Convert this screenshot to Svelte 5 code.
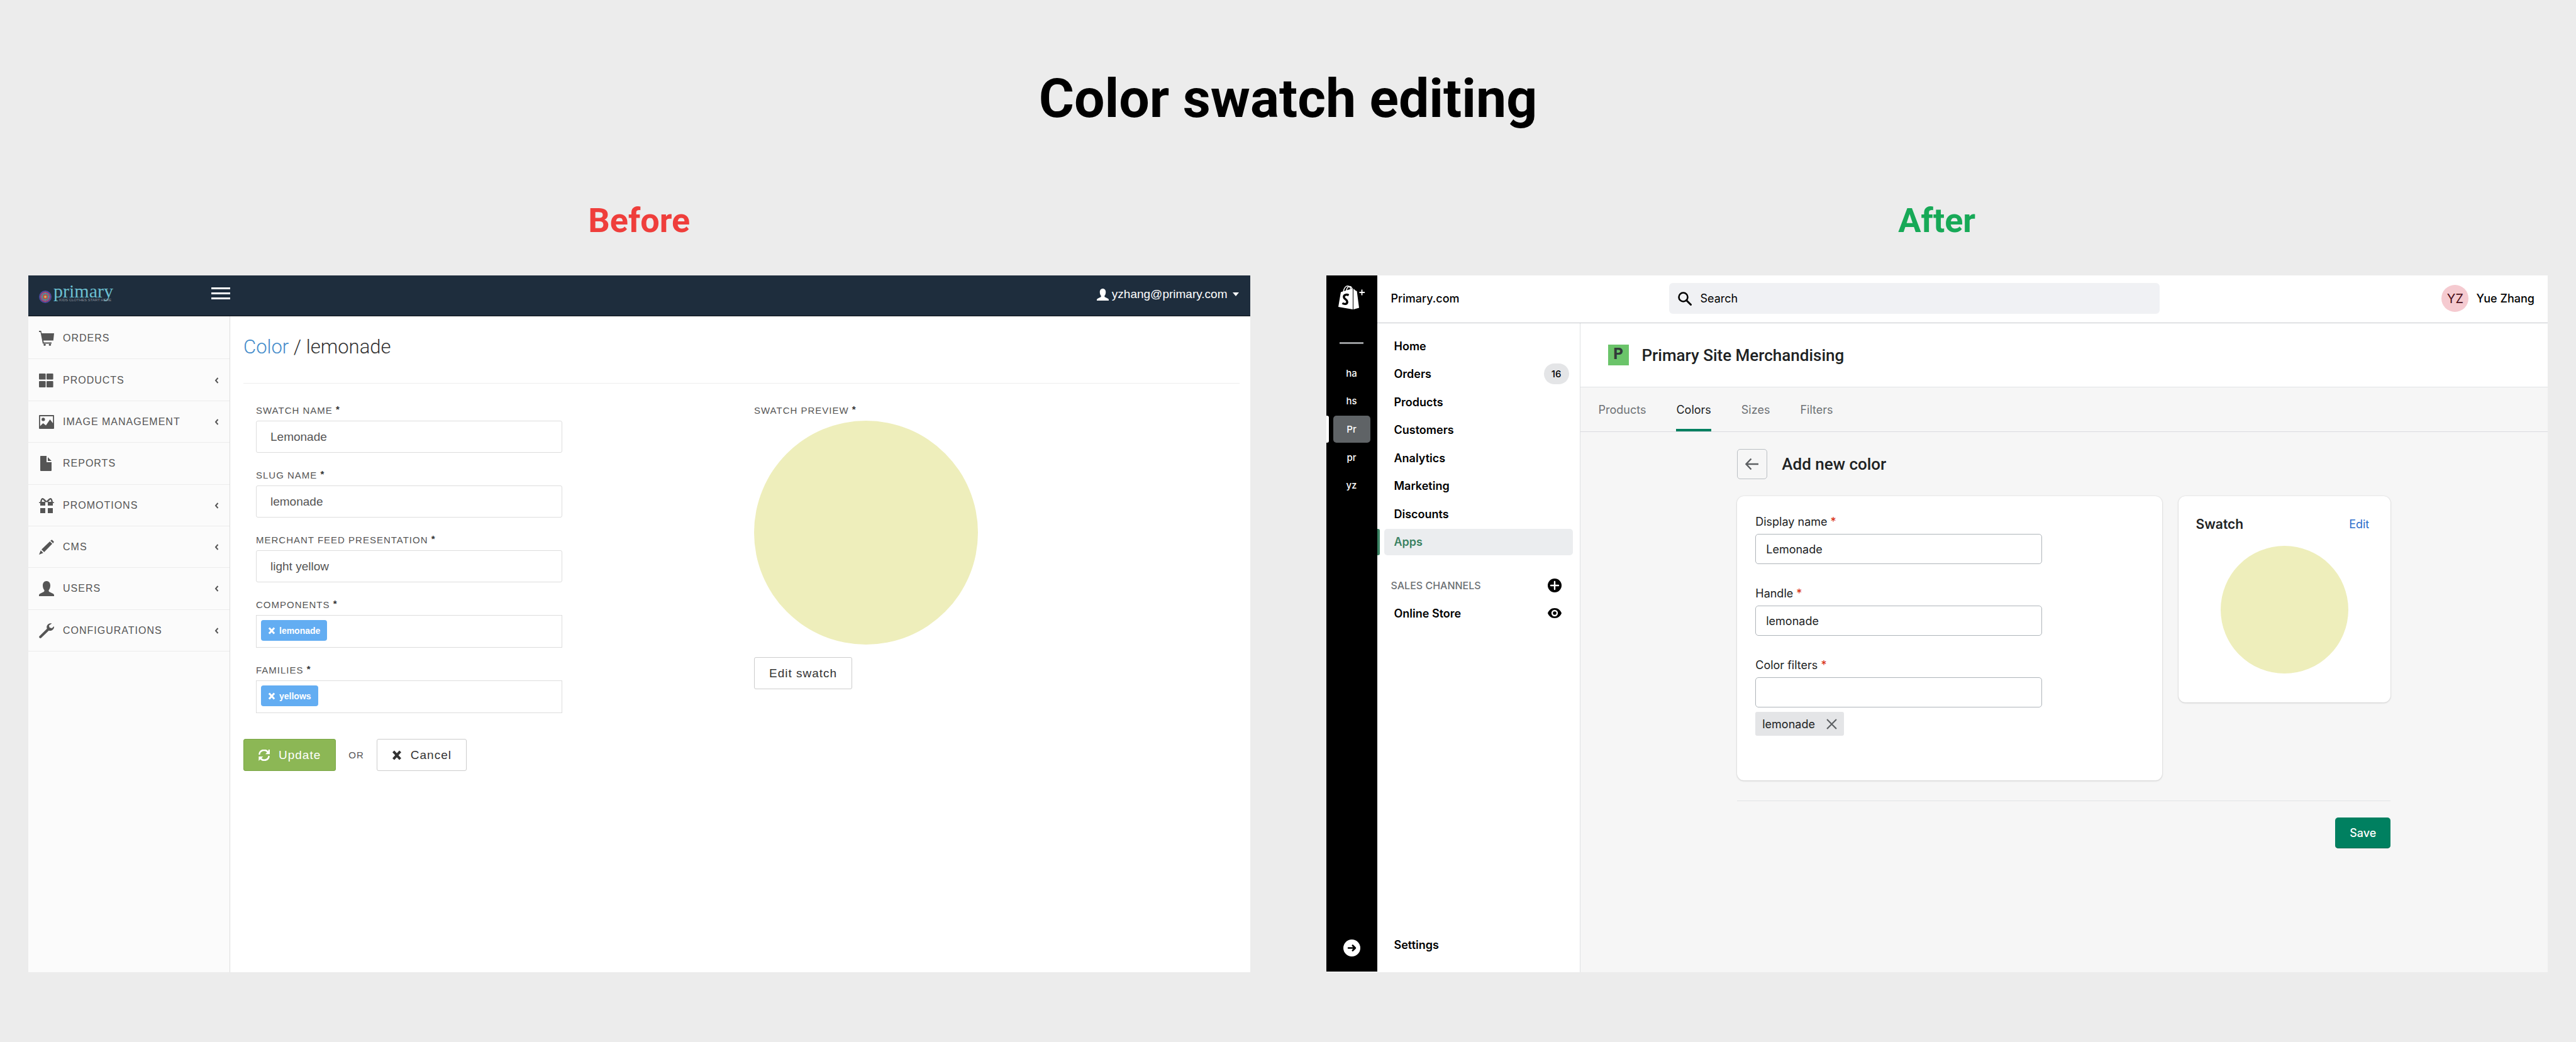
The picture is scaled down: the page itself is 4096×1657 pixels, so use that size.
<script>
  const adminMenu = [
    { label: 'Orders', icon: 'cart', sub: false },
    { label: 'Products', icon: 'grid', sub: true },
    { label: 'Image Management', icon: 'picture', sub: true },
    { label: 'Reports', icon: 'file', sub: false },
    { label: 'Promotions', icon: 'gift', sub: true },
    { label: 'CMS', icon: 'pencil', sub: true },
    { label: 'Users', icon: 'user', sub: true },
    { label: 'Configurations', icon: 'wrench', sub: true }
  ];
  const adminFields = [
    { id: 'swatch-name', label: 'Swatch name', value: 'Lemonade' },
    { id: 'slug-name', label: 'Slug name', value: 'lemonade' },
    { id: 'feed', label: 'Merchant feed presentation', value: 'light yellow' }
  ];
  const tagFields = [
    { label: 'Components', tag: 'lemonade' },
    { label: 'Families', tag: 'yellows' }
  ];
  const stores = ['ha', 'hs', 'Pr', 'pr', 'yz'];
  const shopNav = ['Home', 'Orders', 'Products', 'Customers', 'Analytics', 'Marketing', 'Discounts', 'Apps'];
  const tabs = ['Products', 'Colors', 'Sizes', 'Filters'];
  const shopFields = [
    { id: 'display-name', label: 'Display name', value: 'Lemonade' },
    { id: 'handle', label: 'Handle', value: 'lemonade' },
    { id: 'filters', label: 'Color filters', value: '' }
  ];
</script>

{#snippet glyph(name)}
  <svg class="glyph" viewBox="0 0 24 24" fill="currentColor" aria-hidden="true">
    {#if name === 'cart'}
      <path d="M0 0h3.4l.9 4H24l-1.2 11.6H7l.5 2.8H20v2H6L2.4 2H0z" />
      <circle cx="9" cy="22.3" r="1.7" /><circle cx="17.4" cy="22.3" r="1.7" />
    {:else if name === 'grid'}
      <path d="M1 1h8.6a1 1 0 0 1 1 1v8.6H1a1 1 0 0 1-1-1V2a1 1 0 0 1 1-1zM13 1h8.600a1 1 0 0 1 1 1v7.600a1 1 0 0 1-1 1H13a1 1 0 0 1-1-1V2a1 1 0 0 1 1-1zM1 13h8.600a1 1 0 0 1 1 1v8a1 1 0 0 1-1 1H1a1 1 0 0 1-1-1v-8a1 1 0 0 1 1-1zM13 13h8.600a1 1 0 0 1 1 1v8a1 1 0 0 1-1 1H13a1 1 0 0 1-1-1v-8a1 1 0 0 1 1-1z" />
    {:else if name === 'picture'}
      <path fill-rule="evenodd" d="M1 1h22a1 1 0 0 1 1 1v20a1 1 0 0 1-1 1H1a1 1 0 0 1-1-1V2a1 1 0 0 1 1-1zM1.800 3v15.500L6.500 14l4.500 3.500L17.500 8l4.700 6V3zM6.800 5.200a2.700 2.700 0 1 1 0 5.400a2.700 2.700 0 0 1 0-5.400z" />
    {:else if name === 'file'}
      <path d="M2.800 0H12v10h8v13a1 1 0 0 1-1 1H3a1 1 0 0 1-1-1V1a1 1 0 0 1 .8-1zM14 2l6 6h-6z" />
    {:else if name === 'gift'}
      <path d="M2 6.400C2.400 2.500 4 0 5.600 0 7.800 0 10 3 12 4.800 14 3 16.200 0 18.400 0 20 0 21.600 2.500 22 6.400h2V8h-2v4h-8V6.400h-4V12H2V8H0V6.400zM4.400 6H9.500L6 2.200C5 2.500 4.700 4 4.400 6zM19.600 6C19.300 4 19 2.500 18 2.200L14.500 6zM2 16h8v8H2zM14 16h8v8h-8z" fill-rule="evenodd" />
    {:else if name === 'pencil'}
      <path d="M20.600.3l3.200 3.200-1.300 2.600-4.400-4.400zM17.200 2.900l3.900 3.900L8.200 20 4 15.800zM2.800 17.200l4 4L0 24z" />
    {:else if name === 'user'}
      <path d="M12 0c3.800 0 6 3 6 7 0 3.400-1 5.600-2.400 7.200-.4 1.700 0 2.500 1.600 3.300l5 2.400c1.300.7 1.800 1.500 1.800 2.600V24H0v-1.500c0-1.100.5-1.900 1.800-2.600l5-2.400c1.600-.8 2-1.600 1.600-3.300C7 12.600 6 10.400 6 7c0-4 2.200-7 6-7z" />
    {:else if name === 'wrench'}
      <path d="M20.400.4c-3.200-1-7.200 1.200-8 4.600-.3 1.400-.1 2.600.3 3.700L.8 20.400a2 2 0 0 0 0 2.800 2 2 0 0 0 2.900 0L15.600 11.700c3.600 1.200 7.800-1.400 8.400-5.300l-.2-1.400-3.300 3-3.700-1-1-3.300z" />
    {:else if name === 'cross'}
      <path d="M1.500 5 6 .8 12 7.300 18 .8 22.500 5 16 12l6.500 7L18 23.200l-6-6.500-6 6.500L1.500 19 8 12z" />
    {:else if name === 'refresh'}
      <path d="M21 0h3V9.500h-9.500l3.700-3.600A8.500 8.500 0 0 0 3.300 11L.2 10.500A11.500 11.500 0 0 1 20.500 3.500zM.5 24V14.500H10l-3.700 3.600A8.500 8.500 0 0 0 20.700 13l3.100.5A11.500 11.500 0 0 1 3.700 20.500z" />
    {/if}
  </svg>
{/snippet}

<div class="board">
  <h1>Color swatch editing</h1>
  <div class="columns">
    <section class="column">
      <h2 class="before">Before</h2>
      <div class="frame admin">
        <header class="admin-top">
          <svg class="brand" viewBox="0 -10 126 50" role="img" aria-label="primary">
            <g fill="none" stroke-width="2">
              <circle cx="10" cy="20" r="9" stroke="#4b4a9c" />
              <circle cx="10" cy="20" r="7" stroke="#b04a7c" />
              <circle cx="10" cy="20" r="5" stroke="#4f9aa6" />
              <circle cx="10" cy="20" r="3" stroke="#c4504e" />
            </g>
            <circle cx="10" cy="20" r="2" fill="#d8b45a" />
            <text x="23" y="21" class="brand-name">primary</text>
            <text x="32" y="27" class="brand-line">KIDS CLOTHES START HERE</text>
          </svg>
          <button class="burger" aria-label="Menu"><span></span><span></span><span></span></button>
          <button class="account">{@render glyph('user')}yzhang@primary.com<span class="caret"></span></button>
        </header>
        <div class="admin-body">
          <nav class="admin-nav">
            <ul>
              {#each adminMenu as item}
                <li>
                  <a href="#{item.icon}">
                    {@render glyph(item.icon)}
                    <span class="grow">{item.label}</span>
                    {#if item.sub}
                      <svg class="chev" viewBox="0 0 7 10" aria-hidden="true"><path d="M5.500 1 2 5l3.500 4" fill="none" stroke="currentColor" stroke-width="2" /></svg>
                    {/if}
                  </a>
                </li>
              {/each}
            </ul>
          </nav>
          <main class="admin-main">
            <h3><a href="#color">Color</a> / lemonade</h3>
            <form class="admin-form">
              <div class="fields">
                {#each adminFields as f}
                  <div class="field">
                    <label for={f.id}>{f.label} <b>*</b></label>
                    <input id={f.id} value={f.value} />
                  </div>
                {/each}
                {#each tagFields as f}
                  <div class="field">
                    <span class="label">{f.label} <b>*</b></span>
                    <div class="tagbox"><button type="button" class="chip">{@render glyph('cross')}{f.tag}</button></div>
                  </div>
                {/each}
              </div>
              <div class="preview">
                <span class="label">Swatch preview <b>*</b></span>
                <div class="disc big"></div>
                <button type="button" class="btn">Edit swatch</button>
              </div>
            </form>
            <div class="actions">
              <button class="btn green">{@render glyph('refresh')}Update</button>
              <span>OR</span>
              <button class="btn cancel">{@render glyph('cross')}Cancel</button>
            </div>
          </main>
        </div>
      </div>
    </section>

    <section class="column">
      <h2 class="after">After</h2>
      <div class="frame shop">
        <aside class="rail">
          <svg class="bag" viewBox="0 0 42 38" aria-label="Shopify Plus" role="img">
            <path fill="#fff" d="M4 10.500 23 4.500V38L0 34zM24 5l4 3.500 1.500.3L33 35.500 24 38z" />
            <path fill="none" stroke="#fff" stroke-width="1.500" d="M8 10C9 4 12 .8 14.500 .8S19.500 3 20 7M12.500 9C13.500 4 16 1.500 18 1.500S21.500 3 22 6" />
            <path fill="none" stroke="#000" stroke-width="3.400" d="M16.500 15.500C13 13.500 8.800 15 8.800 18.200 8.800 22 14.200 22 14.200 26 14.200 30 9.500 30.200 6.500 28" />
            <path fill="none" stroke="#fff" stroke-width="1.800" d="M37.500 6.500v9M33.500 11h8.500" />
          </svg>
          <span class="dash"></span>
          <ul>
            {#each stores as s}
              <li class:on={s === 'Pr'}><button>{s}</button></li>
            {/each}
          </ul>
          <button class="expand" aria-label="Expand">
            <svg viewBox="0 0 28 28"><circle cx="14" cy="14" r="14" fill="#fff" /><path d="M8.400 14h10.500M15.400 9.800 19.600 14l-4.200 4.200" fill="none" stroke="#000" stroke-width="2.800" stroke-linecap="round" stroke-linejoin="round" /></svg>
          </button>
        </aside>
        <div class="shop-right">
          <header class="shop-top">
            <strong>Primary.com</strong>
            <label class="search">
              <svg viewBox="0 0 22 22" aria-hidden="true"><circle cx="8.500" cy="8.500" r="7" fill="none" stroke="#000" stroke-width="2.600" /><path d="M13.500 13.500 20.500 20.500" stroke="#000" stroke-width="3" stroke-linecap="round" /></svg>
              <input type="search" placeholder="Search" aria-label="Search" />
            </label>
            <button class="me"><span class="avatar">YZ</span>Yue Zhang</button>
          </header>
          <div class="shop-body">
            <nav class="shop-nav">
              <ul>
                {#each shopNav as item}
                  <li class:on={item === 'Apps'}><a href="#{item}">{item}{#if item === 'Orders'}<span class="badge">16</span>{/if}</a></li>
                {/each}
              </ul>
              <div class="channels">
                SALES CHANNELS
                <button aria-label="Add channel"><svg viewBox="0 0 22 22"><circle cx="11" cy="11" r="11" fill="#000" /><path d="M11 5v12M5 11h12" stroke="#fff" stroke-width="2.400" stroke-linecap="round" /></svg></button>
              </div>
              <div class="store">
                <a href="#online">Online Store</a>
                <button aria-label="View store"><svg viewBox="0 0 22 22"><path fill="#000" fill-rule="evenodd" d="M11 3C5.500 3 1.800 6.500 0 11c1.800 4.500 5.500 8 11 8s9.200-3.500 11-8C20.200 6.500 16.500 3 11 3zM11 5.800a5.200 5.200 0 1 1 0 10.400 5.200 5.200 0 0 1 0-10.400z" /><circle cx="11" cy="11" r="2.800" /></svg></button>
              </div>
              <a class="settings" href="#settings">Settings</a>
            </nav>
            <main class="shop-main">
              <div class="app-title"><span class="app-icon">P</span><h3>Primary Site Merchandising</h3></div>
              <nav class="tabs">
                {#each tabs as t}<a href="#{t}" class:on={t === 'Colors'}>{t}</a>{/each}
              </nav>
              <div class="page">
                <div class="page-head">
                  <button aria-label="Back"><svg viewBox="0 0 22 22"><path d="M21 11H2M9.500 2.500 1.500 11l8 8.500" fill="none" stroke="#5c5f62" stroke-width="2.400" /></svg></button>
                  <h4>Add new color</h4>
                </div>
                <div class="cards">
                  <form class="card details">
                    {#each shopFields as f}
                      <div class="sfield">
                        <label for={f.id}>{f.label} <i>*</i></label>
                        <input id={f.id} value={f.value} />
                      </div>
                    {/each}
                    <span class="tag">lemonade<button type="button" aria-label="Remove lemonade"><svg viewBox="0 0 16 16"><path d="M1 1l14 14M15 1 1 15" stroke="#5c5f62" stroke-width="2" /></svg></button></span>
                  </form>
                  <section class="card swatch">
                    <header><h5>Swatch</h5><a href="#edit">Edit</a></header>
                    <div class="disc small"></div>
                  </section>
                </div>
                <footer><button>Save</button></footer>
              </div>
            </main>
          </div>
        </div>
      </div>
    </section>
  </div>
</div>

<style>
  :global(body) { background: #ececec; }
  .board, .board * { box-sizing: border-box; }
  .board { min-height: 100vh; padding: 107px 45px 111px; display: flex; flex-direction: column; font-family: "Liberation Sans", Arial, sans-serif; }
  h1, h2, h3, h4, h5, ul { margin: 0; padding: 0; }
  ul { list-style: none; }
  a { color: inherit; text-decoration: none; }
  button, input { font: inherit; color: inherit; margin: 0; padding: 0; border: 0; background: none; letter-spacing: inherit; }
  svg { display: block; flex: none; }
  h1 { font: 700 86px/100px Roboto, sans-serif; text-align: center; color: #000; }
  .columns { flex: 1; display: grid; grid-template-columns: 1fr 1fr; gap: 121px; margin-top: 108px; }
  .column { display: flex; flex-direction: column; min-width: 0; }
  h2 { font: 700 54px/72px Roboto, sans-serif; text-align: center; margin-bottom: 51px; }
  .before { color: #ef3e3b; }
  .after { color: #17a957; }
  .frame { flex: 1; display: flex; background: #fff; }

  .admin { flex-direction: column; color: #555; }
  .admin-top { height: 65px; background: #1e2d3d; border-bottom: 1px solid #0a0f14; display: flex; align-items: flex-start; padding: 4px 18px 0 17px; color: #fff; font-size: 19px; line-height: 28px; }
  .brand { width: 126px; height: 50px; margin-right: 148px; overflow: visible; }
  .brand-name { font: 30px "Liberation Serif", serif; fill: #6cc0d2; }
  .brand-line { font: 6px "Liberation Sans Narrow", "Liberation Sans", sans-serif; fill: #8b919b; }
  .burger { display: flex; flex-direction: column; gap: 5px; width: 30px; margin-top: 15px; }
  .burger span { height: 3px; background: #fff; }
  .account { margin-left: auto; display: flex; align-items: center; gap: 5px; margin-top: 12px; }
  .account .glyph { width: 19px; height: 19px; }
  .caret { border: 5px solid transparent; border-top: 6px solid #fff; border-bottom: 0; margin-left: 3px; }
  .admin-body { flex: 1; display: flex; }
  .admin-nav { width: 321px; background: #fbfbfb; border-right: 1px solid #ddd; padding-top: 2px; }
  .admin-nav ul { height: 531px; display: flex; flex-direction: column; }
  .admin-nav li { flex: 1; border-bottom: 1px solid #ececec; }
  .admin-nav a { height: 100%; display: flex; align-items: center; gap: 14px; padding: 1px 17px 0; font-size: 16px; letter-spacing: 1px; text-transform: uppercase; }
  .admin-nav .glyph { width: 24px; height: 24px; }
  .grow { flex: 1; }
  .chev { width: 7px; height: 10px; }
  .admin-main { flex: 1; padding: 26px 17px 0 21px; }
  .admin-main h3 { font: 300 31px/46px Roboto, sans-serif; color: #333; padding-bottom: 34px; border-bottom: 1px solid #eee; }
  .admin-main h3 a { color: #428bca; }
  .admin-form { display: grid; grid-template-columns: 487px 1fr; column-gap: 305px; padding: 33px 20px 0; }
  .fields { display: flex; flex-direction: column; gap: 26px; }
  .field label, .label { display: block; font-size: 15px; line-height: 20px; letter-spacing: 1px; text-transform: uppercase; margin-bottom: 6px; }
  .label b, .field b { color: #333; vertical-align: 2px; line-height: 1px; }
  .field input { display: block; width: 100%; height: 51px; border: 1px solid #ddd; border-radius: 3px; padding: 0 22px; font-size: 19px; }
  .tagbox { height: 52px; border: 1px solid #ddd; padding: 7px; }
  .chip { display: flex; align-items: center; gap: 6px; height: 33px; padding: 0 11px; border-radius: 4px; background: #63adf2; color: #fff; font-weight: 700; font-size: 14px; }
  .chip .glyph { width: 12px; height: 12px; }
  .disc { border-radius: 50%; background: #eeeebb; }
  .big { width: 356px; height: 356px; margin-bottom: 20px; }
  .btn { display: flex; align-items: center; gap: 14px; height: 51px; padding: 0 23px; border: 1px solid #ccc; border-radius: 3px; background: #fff; color: #333; font-size: 19px; letter-spacing: 1px; }
  .btn .glyph { width: 18px; height: 18px; }
  .cancel .glyph { width: 16px; height: 16px; }
  .green { background: #8cb755; border-color: #7aa645; color: #fff; }
  .actions { display: flex; align-items: center; gap: 20px; margin-top: 41px; font-size: 15px; letter-spacing: 1px; }

  .shop { font-family: Inter, "Liberation Sans", sans-serif; font-size: 18px; color: #202223; }
  .rail { width: 81px; margin-bottom: 1px; background: #000; color: #fff; display: flex; flex-direction: column; align-items: center; padding: 16px 0 24px; }
  .bag { width: 42px; height: 38px; }
  .dash { width: 38px; height: 3px; background: #999c9e; margin: 52px 0 24px; }
  .rail ul { width: 100%; height: 223px; display: flex; flex-direction: column; }
  .rail li { flex: 1; display: flex; padding: 1px 11px 1px 0; }
  .rail li::before { content: ""; width: 4px; margin-right: 7px; border-radius: 0 3px 3px 0; }
  .rail li button { flex: 1; border-radius: 5px; font-size: 15px; font-weight: 500; }
  .rail .on::before { background: #fff; }
  .rail .on button { background: #5f6366; }
  .expand { margin-top: auto; }
  .expand svg { width: 27px; height: 27px; }
  .shop-right { flex: 1; display: flex; flex-direction: column; }
  .shop-top { height: 76px; border-bottom: 1px solid #c4c8cc; display: grid; grid-template-columns: 442px 780px 1fr; align-items: center; padding: 0 21px 2px 22px; color: #000; }
  .shop-top strong { font-weight: 500; }
  .search { display: flex; align-items: center; gap: 14px; height: 49px; padding: 0 14px; background: #f0f1f4; border-radius: 6px; }
  .search svg { width: 22px; height: 22px; }
  .search input { flex: 1; outline: 0; }
  .search input::placeholder { color: #000; opacity: 1; }
  .me { justify-self: end; display: flex; align-items: center; gap: 12px; font-weight: 500; }
  .avatar { width: 43px; height: 43px; border-radius: 50%; background: #f5cad0; color: #4a0e19; display: grid; place-items: center; font-size: 20px; font-weight: 400; }
  .shop-body { flex: 1; display: flex; }
  .shop-nav { width: 323px; border-right: 1px solid #dfe1e3; display: flex; flex-direction: column; padding-top: 14px; color: #000; font-weight: 600; }
  .shop-nav ul { height: 356px; display: flex; flex-direction: column; }
  .shop-nav li { flex: 1; display: flex; padding: 1px 11px 1px 0; }
  .shop-nav li::before { content: ""; width: 4px; margin-right: 7px; border-radius: 0 3px 3px 0; }
  .shop-nav li a { flex: 1; display: flex; align-items: center; justify-content: space-between; padding: 0 6px 0 16px; border-radius: 5px; }
  .shop-nav .on::before { background: #3b8263; }
  .shop-nav .on a { background: #ebedef; color: #3b8263; }
  .badge { width: 40px; height: 33px; border-radius: 17px; background: #e4e5e7; display: grid; place-items: center; font-size: 15px; font-weight: 500; }
  .channels, .store { display: flex; align-items: center; justify-content: space-between; height: 44px; padding: 0 29px 0 22px; }
  .channels { margin-top: 25px; font-size: 16px; font-weight: 500; color: #6d7175; }
  .store { padding-left: 27px; }
  .channels svg, .store svg { width: 22px; height: 22px; }
  .settings { margin: auto 0 32px 27px; line-height: 22px; }
  .shop-main { flex: 1; background: #f6f6f6; display: flex; flex-direction: column; }
  .app-title { height: 102px; background: #fff; border-bottom: 1px solid #e1e3e5; display: flex; align-items: center; gap: 21px; padding-left: 44px; }
  .app-icon { width: 33px; height: 33px; background: #6bc46a; color: #333b3a; display: grid; place-items: center; font: 700 27px/33px "Liberation Mono", monospace; }
  .app-title h3, h4 { font: 500 26px/32px Roboto, sans-serif; }
  .tabs { height: 71px; border-bottom: 1px solid #dadbe0; display: flex; gap: 48px; padding-left: 29px; color: #6d7175; }
  .tabs a { display: flex; align-items: center; border-top: 4px solid transparent; border-bottom: 4px solid transparent; }
  .tabs .on { color: #202223; border-bottom-color: #008060; }
  .page { width: 1039px; margin: 0 auto; padding-top: 27px; }
  .page-head { display: flex; align-items: center; gap: 23px; margin-bottom: 27px; }
  .page-head button { width: 48px; height: 48px; border: 1px solid #babfc3; border-radius: 5px; display: grid; place-items: center; }
  .page-head svg { width: 22px; height: 22px; }
  .cards { display: grid; grid-template-columns: 2fr 1fr; gap: 26px; align-items: start; }
  .card { background: #fff; border-radius: 11px; box-shadow: 0 0 2px #0002, 0 1px 3px #0002; }
  .details { height: 452px; padding: 29px; }
  .sfield { margin-bottom: 35px; }
  .sfield:nth-of-type(3) { margin-bottom: 7px; }
  .sfield label { display: block; line-height: 24px; margin-bottom: 7px; }
  i { color: #d72c0d; font-style: normal; }
  .sfield input { display: block; width: 456px; height: 48px; border: 1px solid #aeb4b9; border-radius: 5px; padding: 0 16px; }
  .tag { display: flex; width: fit-content; align-items: center; gap: 18px; height: 38px; padding: 0 11px; background: #e4e5e7; border-radius: 3px; }
  .tag svg { width: 17px; height: 17px; }
  .swatch { height: 328px; padding: 28px; }
  .swatch header { display: flex; justify-content: space-between; align-items: center; height: 33px; padding-right: 6px; }
  .swatch h5 { font-size: 21px; font-weight: 600; }
  .swatch a { color: #2c6ecb; }
  .small { width: 203px; height: 203px; margin: 18px auto 0; }
  .page footer { border-top: 1px solid #e1e3e5; margin-top: 32px; padding-top: 26px; display: flex; justify-content: flex-end; }
  .page footer button { width: 88px; height: 49px; border-radius: 5px; background: #008060; color: #fff; font-weight: 500; box-shadow: inset 0 -1px 0 #006e52, 0 1px 0 #0001; }
</style>
